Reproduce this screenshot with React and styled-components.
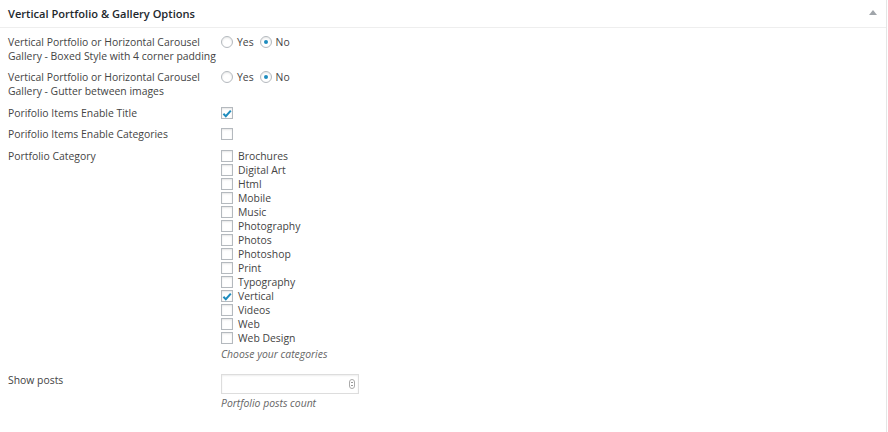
import React from "react";
import styled, { createGlobalStyle } from "styled-components";

const Global = createGlobalStyle`
  html, body { margin: 0; padding: 0; background: #fff; }
  body { font-family: "Open Sans", "Noto Sans", sans-serif; color: #444; }
`;

const Panel = styled.div`
  width: 886px;
  height: 432px;
  border-right: 1px solid #e5e5e5;
  background: #fff;
  box-sizing: content-box;
`;

const Header = styled.div`
  height: 27px;
  border-bottom: 1px solid #eeeeee;
  display: flex;
  align-items: center;
  justify-content: space-between;
  padding: 0 9px 0 8px;
`;

const Title = styled.h2`
  margin: 0;
  font-size: 11.1px;
  font-weight: 600;
  color: #23282d;
  line-height: 14px;
`;

const Arrow = styled.span`
  width: 0;
  height: 0;
  border-left: 4px solid transparent;
  border-right: 4px solid transparent;
  border-bottom: 5px solid #a0a5aa;
  margin-top: -2px;
`;

const Body = styled.div`
  padding: 7px 8px 0 8px;
  display: flex;
  flex-direction: column;
`;

const Row = styled.div`
  display: grid;
  grid-template-columns: 213px 1fr;
  font-size: 10.4px;
  line-height: 14px;
  margin-bottom: ${(p) => p.$mb ?? 7}px;
`;

const Label = styled.div`
  color: #444;
  white-space: nowrap;
`;

const Control = styled.div`
  display: flex;
  flex-direction: column;
`;

const RadioGroup = styled.div`
  display: flex;
  align-items: center;
  height: 14px;
`;

const RadioItem = styled.label`
  display: flex;
  align-items: center;
  margin-right: ${(p) => p.$mr ?? 0}px;
`;

const Radio = styled.span`
  width: 12px;
  height: 12px;
  box-sizing: border-box;
  border-radius: 50%;
  border: 1px solid #b4b9be;
  box-shadow: inset 0 1px 2px rgba(0, 0, 0, 0.1);
  background: #fff;
  display: inline-flex;
  align-items: center;
  justify-content: center;
  margin-right: 4px;
  &::after {
    content: "";
    width: 4px;
    height: 4px;
    border-radius: 50%;
    background: ${(p) => (p.$on ? "#1e8cbe" : "transparent")};
  }
`;

const Box = styled.span`
  width: 12px;
  height: 12px;
  box-sizing: border-box;
  border: 1px solid #b4b9be;
  box-shadow: inset 0 1px 2px rgba(0, 0, 0, 0.1);
  background: #fff;
  display: inline-flex;
  align-items: center;
  justify-content: center;
  flex: none;
`;

const CheckLine = styled.label`
  display: flex;
  align-items: center;
  height: 14px;
  gap: 5px;
`;

const SingleCheck = styled.div`
  height: 14px;
  display: flex;
  align-items: center;
`;

const Desc = styled.p`
  margin: 2px 0 0 0;
  font-style: italic;
  color: #666;
  font-size: 10.4px;
  line-height: 14px;
`;

const NumberBox = styled.div`
  width: 138px;
  height: 20px;
  box-sizing: border-box;
  border: 1px solid #ddd;
  box-shadow: inset 0 1px 2px rgba(0, 0, 0, 0.07);
  display: flex;
  align-items: center;
  justify-content: flex-end;
  padding-right: 3px;
  margin-top: 1px;
`;

const Spinner = styled.span`
  width: 6px;
  height: 10px;
  border: 1px solid #aaa;
  border-radius: 3px;
  display: flex;
  flex-direction: column;
  align-items: center;
  justify-content: space-around;
  padding: 1px 0;
  box-sizing: border-box;
  &::before, &::after {
    content: "";
    width: 2px;
    height: 1px;
    background: #999;
  }
`;

const Check = () => (
  <svg width="10" height="9" viewBox="0 0 10 9">
    <path d="M1.4 4.8 L3.8 7.2 L8.8 1.6" fill="none" stroke="#1e8cbe" strokeWidth="2" />
  </svg>
);

const CheckBox = ({ on }) => <Box>{on && <Check />}</Box>;

const categories = [
  ["Brochures", false],
  ["Digital Art", false],
  ["Html", false],
  ["Mobile", false],
  ["Music", false],
  ["Photography", false],
  ["Photos", false],
  ["Photoshop", false],
  ["Print", false],
  ["Typography", false],
  ["Vertical", true],
  ["Videos", false],
  ["Web", false],
  ["Web Design", false],
];

const YesNo = () => (
  <RadioGroup>
    <RadioItem $mr={6}>
      <Radio />
      Yes
    </RadioItem>
    <RadioItem>
      <Radio $on />
      No
    </RadioItem>
  </RadioGroup>
);

export default function App() {
  return (
    <>
      <Global />
      <Panel>
        <Header>
          <Title>Vertical Portfolio &amp; Gallery Options</Title>
          <Arrow />
        </Header>
        <Body>
          <Row>
            <Label>
              Vertical Portfolio or Horizontal Carousel
              <br />
              Gallery - Boxed Style with 4 corner padding
            </Label>
            <Control>
              <YesNo />
            </Control>
          </Row>
          <Row $mb={8}>
            <Label>
              Vertical Portfolio or Horizontal Carousel
              <br />
              Gallery - Gutter between images
            </Label>
            <Control>
              <YesNo />
            </Control>
          </Row>
          <Row>
            <Label>Porifolio Items Enable Title</Label>
            <SingleCheck>
              <CheckBox on />
            </SingleCheck>
          </Row>
          <Row $mb={8}>
            <Label>Porifolio Items Enable Categories</Label>
            <SingleCheck>
              <CheckBox />
            </SingleCheck>
          </Row>
          <Row $mb={12}>
            <Label>Portfolio Category</Label>
            <Control>
              {categories.map(([name, on]) => (
                <CheckLine key={name}>
                  <CheckBox on={on} />
                  {name}
                </CheckLine>
              ))}
              <Desc>Choose your categories</Desc>
            </Control>
          </Row>
          <Row>
            <Label>Show posts</Label>
            <Control>
              <NumberBox>
                <Spinner />
              </NumberBox>
              <Desc>Portfolio posts count</Desc>
            </Control>
          </Row>
        </Body>
      </Panel>
    </>
  );
}
